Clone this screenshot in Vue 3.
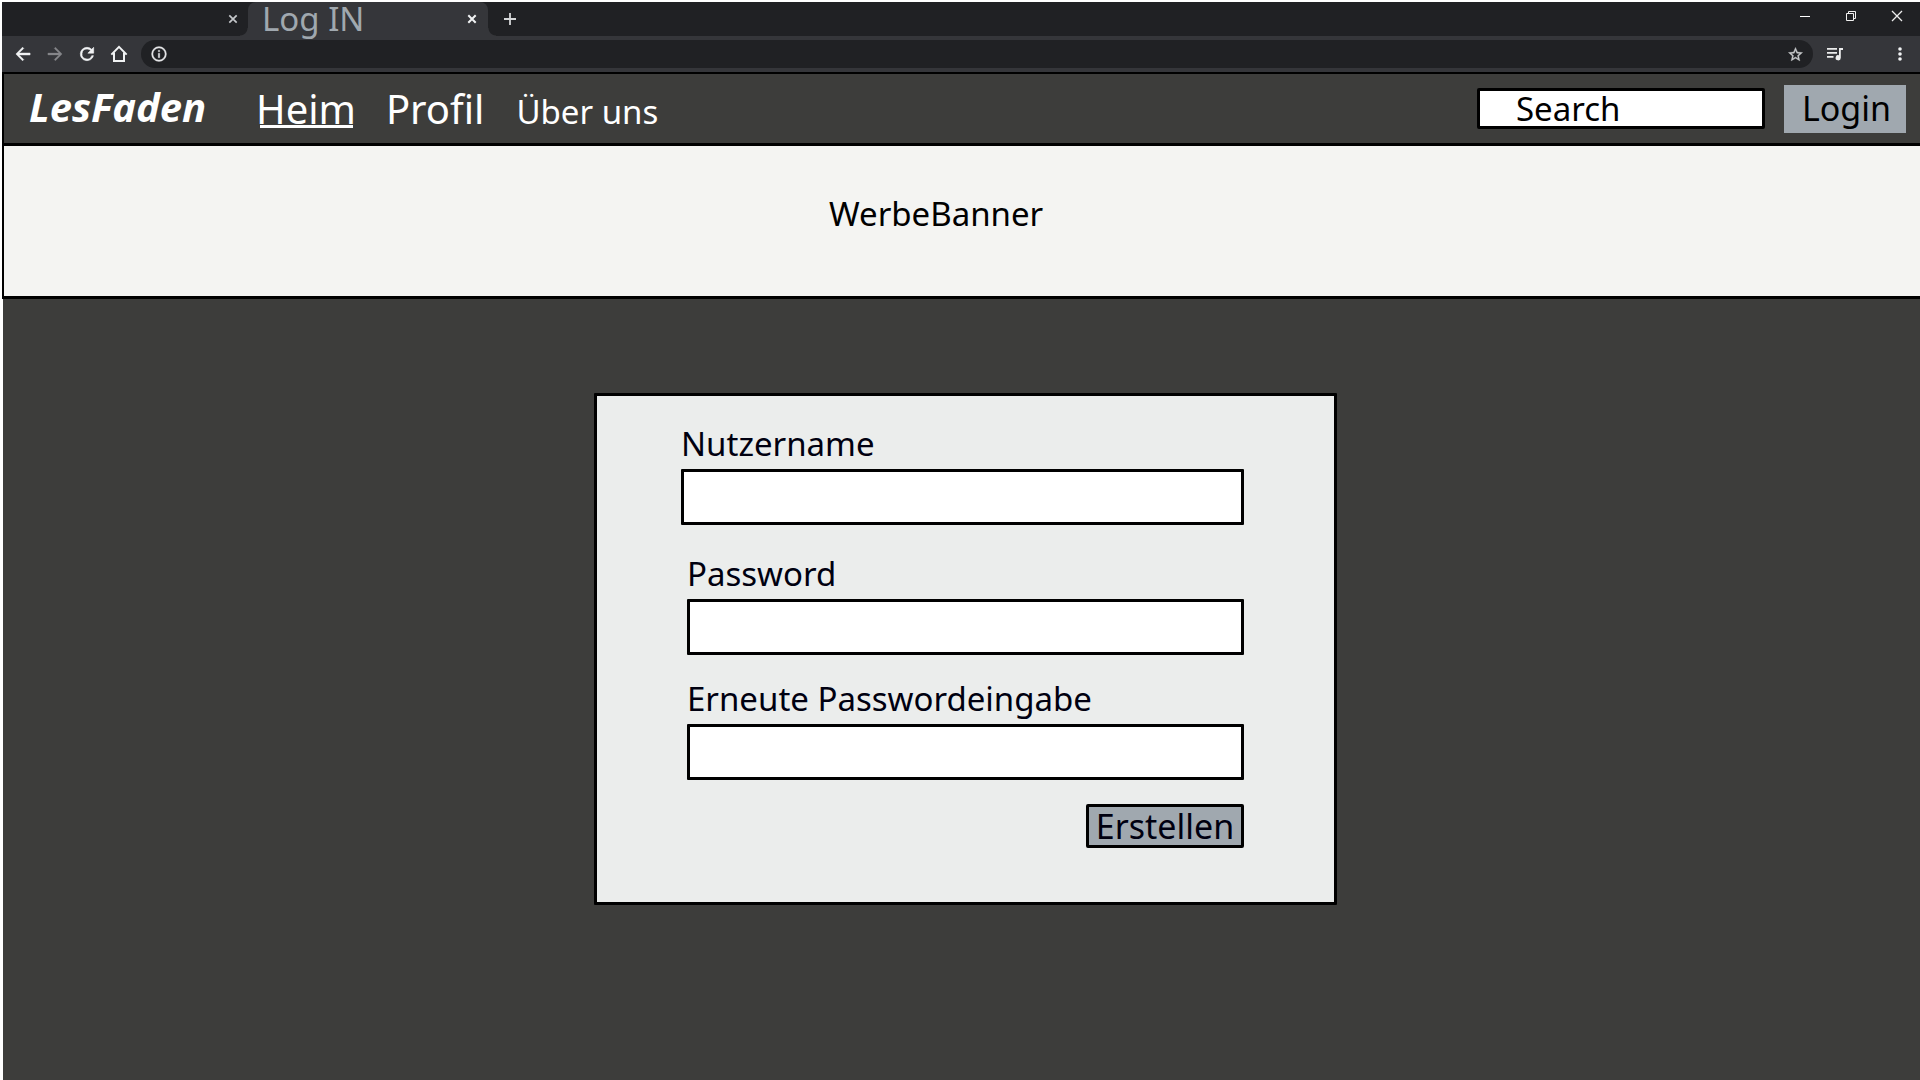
<script setup>
import { ref } from 'vue'

const search = ref('')
const username = ref('')
const password = ref('')
const repeated = ref('')
</script>

<template>
  <div class="window">
    <div class="chrome">
      <div class="tabs">
        <div class="tab">
          <button class="tab-close" type="button" aria-label="Close tab">
            <svg width="10" height="10" viewBox="0 0 10 10"><path d="M1.3 1.3l7.4 7.4M8.7 1.3L1.3 8.7" stroke="#c4c7ca" stroke-width="1.7" /></svg>
          </button>
        </div>
        <div class="tab active">
          <span class="tab-title">Log IN</span>
          <button class="tab-close" type="button" aria-label="Close tab">
            <svg width="10" height="10" viewBox="0 0 10 10"><path d="M1.3 1.3l7.4 7.4M8.7 1.3L1.3 8.7" stroke="#f1f3f4" stroke-width="2" /></svg>
          </button>
        </div>
        <button class="new-tab" type="button" aria-label="New tab">
          <svg width="12" height="12" viewBox="0 0 12 12"><path d="M6 0v12M0 6h12" stroke="#d5d7d9" stroke-width="1.8" /></svg>
        </button>
        <div class="controls">
          <button type="button" aria-label="Minimize">
            <svg width="12" height="12" viewBox="0 0 12 12"><path d="M1 6.5h10" stroke="#fff" /></svg>
          </button>
          <button type="button" aria-label="Restore">
            <svg width="12" height="12" viewBox="0 0 12 12" fill="none" stroke="#f1f1f1"><path d="M1.5 3.5h7v7h-7zM3.5 3.5v-2h7v7h-2" /></svg>
          </button>
          <button type="button" aria-label="Close">
            <svg width="12" height="12" viewBox="0 0 12 12"><path d="M1 1l10 10M11 1L1 11" stroke="#eee" stroke-width="1.3" /></svg>
          </button>
        </div>
      </div>
      <div class="toolbar">
        <button class="tool" type="button" aria-label="Back">
          <svg width="20" height="20" viewBox="0 0 24 24" fill="#f1f3f4" stroke="#f1f3f4" stroke-width=".6"><path d="M20.500 10.900H7.300l5.600-5.600L11.500 3.800 3.500 12l8 8.200 1.400-1.500-5.600-5.600h13.200z" /></svg>
        </button>
        <button class="tool" type="button" aria-label="Forward">
          <svg width="20" height="20" viewBox="0 0 24 24" fill="#85868a" stroke="#85868a" stroke-width=".4"><path d="M3.500 10.900h13.200l-5.600-5.600 1.400-1.500 8 8.200-8 8.200-1.400-1.500 5.600-5.600H3.500z" /></svg>
        </button>
        <button class="tool" type="button" aria-label="Reload">
          <svg width="20" height="20" viewBox="0 0 24 24" fill="#f1f3f4" stroke="#f1f3f4" stroke-width=".7"><path d="M17.650 6.350A7.950 7.950 0 0 0 12 4a8 8 0 1 0 7.730 10h-2.080A6 6 0 1 1 12 6c1.660 0 3.140.69 4.220 1.780L13 11h7V4z" /></svg>
        </button>
        <button class="tool" type="button" aria-label="Home">
          <svg width="20" height="20" viewBox="0 0 24 24" fill="none" stroke="#f1f3f4" stroke-width="2.4"><path d="M2.800 12.700L12 3.500l9.200 9.200M6 10.500V20.500h12V10.500" /></svg>
        </button>
        <div class="omnibox">
          <svg width="18" height="18" viewBox="0 0 24 24" fill="#e4e5e7" stroke="#e4e5e7" stroke-width=".4"><path d="M11 7h2v2h-2zm0 4h2v6h-2zm1-9a10 10 0 1 0 0 20 10 10 0 0 0 0-20zm0 18a8 8 0 1 1 0-16 8 8 0 0 1 0 16z" /></svg>
          <svg width="17" height="17" viewBox="0 0 24 24" fill="#c8cacc" stroke="#c8cacc" stroke-width=".5"><path d="M22 9.240l-7.190-.62L12 2 9.190 8.630 2 9.240l5.460 4.730L5.820 21 12 17.270 18.180 21l-1.630-7.030zM12 15.400l-3.760 2.270 1-4.280-3.320-2.880 4.380-.38L12 6.100l1.710 4.040 4.380.38-3.320 2.880 1 4.280z" /></svg>
        </div>
        <button class="tool" type="button" aria-label="Media">
          <svg width="18" height="14" viewBox="0 0 18 14" fill="#eceded"><path d="M1 1h10v1.800H1zM1 5h10v1.800H1zM1 9h6.500v1.800H1zM13 1h4v1.900h-2.200v7.900a2.600 2.600 0 1 1-1.800-2.500z" /></svg>
        </button>
        <button class="tool menu" type="button" aria-label="Menu">
          <svg width="4" height="14" viewBox="0 0 4 14" fill="#f1f3f4"><circle cx="2" cy="2" r="1.800" /><circle cx="2" cy="7" r="1.800" /><circle cx="2" cy="12" r="1.800" /></svg>
        </button>
      </div>
    </div>

    <header class="header">
      <a class="logo" href="#">LesFaden</a>
      <nav class="nav">
        <a class="current" href="#">Heim</a>
        <a href="#">Profil</a>
        <a class="small" href="#">Über uns</a>
      </nav>
      <input v-model="search" class="search" type="search" placeholder="Search" aria-label="Search" />
      <button class="login" type="button">Login</button>
    </header>

    <section class="banner">WerbeBanner</section>

    <main class="main">
      <form class="card" @submit.prevent>
        <div class="field">
          <label for="username">Nutzername</label>
          <input id="username" v-model="username" type="text" />
        </div>
        <div class="passwords">
          <div class="field">
            <label for="password">Password</label>
            <input id="password" v-model="password" type="password" />
          </div>
          <div class="field">
            <label for="repeated">Erneute Passwordeingabe</label>
            <input id="repeated" v-model="repeated" type="password" />
          </div>
        </div>
        <button class="submit" type="submit">Erstellen</button>
      </form>
    </main>
  </div>
</template>

<style>
body {
  background: #fff;
}
</style>

<style scoped>
.window,
.window * {
  box-sizing: border-box;
}

.window {
  display: flex;
  flex-direction: column;
  min-height: 100vh;
  padding: 2px 0 0 2px;
  font-family: "Noto Sans", sans-serif;
  font-size: 33px;
  line-height: 44px;
  color: #000;
}

button,
input {
  margin: 0;
  padding: 0;
  border: 0;
  border-radius: 0;
  font: inherit;
  color: inherit;
}

button {
  background: none;
}

svg {
  display: block;
  flex: none;
}

a {
  color: inherit;
  text-decoration: none;
}

.chrome {
  background: #35363a;
}

.tabs {
  display: flex;
  height: 34px;
  background: #202124;
}

.tab {
  display: flex;
  align-items: center;
  justify-content: flex-end;
  width: 246px;
  padding-right: 10px;
}

.tab.active {
  position: relative;
  justify-content: space-between;
  width: 240px;
  padding: 0 11px 0 14px;
  border-radius: 8px 8px 0 0;
  background: #35363a;
}

.tab.active::before,
.tab.active::after {
  content: "";
  position: absolute;
  bottom: 0;
  width: 8px;
  height: 8px;
}

.tab.active::before {
  right: 100%;
  background: radial-gradient(circle at 0 0, #202124 7px, #35363a 8px);
}

.tab.active::after {
  left: 100%;
  background: radial-gradient(circle at 100% 0, #202124 7px, #35363a 8px);
}

.tab-title {
  line-height: 34px;
  color: #a0a8af;
}

.tab-close,
.new-tab,
.tool,
.controls button {
  display: flex;
  align-items: center;
  justify-content: center;
}

.new-tab {
  width: 44px;
}

.controls {
  display: flex;
  height: 28px;
  margin-left: auto;
}

.controls button {
  width: 46px;
}

.toolbar {
  display: flex;
  align-items: center;
  height: 36px;
  padding: 0 4px 0 5px;
}

.tool {
  width: 32px;
  height: 32px;
}

.omnibox {
  display: flex;
  flex: 1;
  align-items: center;
  justify-content: space-between;
  height: 28px;
  margin: 0 6px;
  padding: 0 9px;
  border-radius: 14px;
  background: #202124;
}

.menu {
  margin-left: 33px;
}

.header {
  display: flex;
  align-items: center;
  height: 71px;
  padding: 0 14px 0 25px;
  border: solid #000;
  border-width: 2px 0 0 2px;
  background: #3d3d3b;
  color: #fff;
}

.logo {
  width: 227px;
  padding-bottom: 4px;
  font-size: 40px;
  font-weight: 700;
  font-style: italic;
}

.nav {
  display: flex;
  align-items: baseline;
  gap: 30px;
  padding-top: 3px;
  font-size: 40px;
}

.current {
  position: relative;
}

.current::after {
  content: "";
  position: absolute;
  right: 3px;
  bottom: 3px;
  left: 4px;
  height: 3px;
  background: #fff;
}

.small {
  padding-left: 2px;
  font-size: 33px;
}

.search {
  width: 288px;
  height: 41px;
  margin-left: auto;
  padding: 0 36px;
  border: 3px solid #000;
  border-radius: 2px;
  background: #fff;
  color: #000;
  appearance: none;
}

.search::placeholder {
  color: #000;
  opacity: 1;
}

.login {
  width: 122px;
  height: 48px;
  margin-left: 19px;
  padding: 0 0 2px 3px;
  background: #a0a8af;
  color: #000;
  font-size: 34px;
}

.banner {
  height: 156px;
  padding: 46px 0 0 825px;
  border: solid #000;
  border-width: 3px 0 3px 2px;
  background: #f4f4f2;
}

.main {
  display: flex;
  flex: 1;
  align-items: flex-start;
  justify-content: center;
  margin-left: 1px;
  padding: 94px 0 94px 8px;
  background: #3d3d3b;
}

.card {
  display: flex;
  flex-direction: column;
  width: 100%;
  max-width: 743px;
  padding: 26px 90px 54px 84px;
  border: 3px solid #000;
  border-radius: 1px;
  background: #ebedec;
  color: #000010;
}

.field {
  display: flex;
  flex-direction: column;
  gap: 3px;
}

.field input {
  width: 100%;
  height: 56px;
  padding: 0 12px;
  border: 3px solid #000;
  border-radius: 1px;
  background: #fff;
}

.passwords {
  display: flex;
  flex-direction: column;
  gap: 22px;
  margin-top: 27px;
  padding-left: 6px;
}

.submit {
  align-self: flex-end;
  width: 158px;
  height: 44px;
  margin-top: 24px;
  border: 3px solid #000;
  border-radius: 2px;
  background: #a0a8af;
  font-size: 34px;
  line-height: 36px;
}
</style>
